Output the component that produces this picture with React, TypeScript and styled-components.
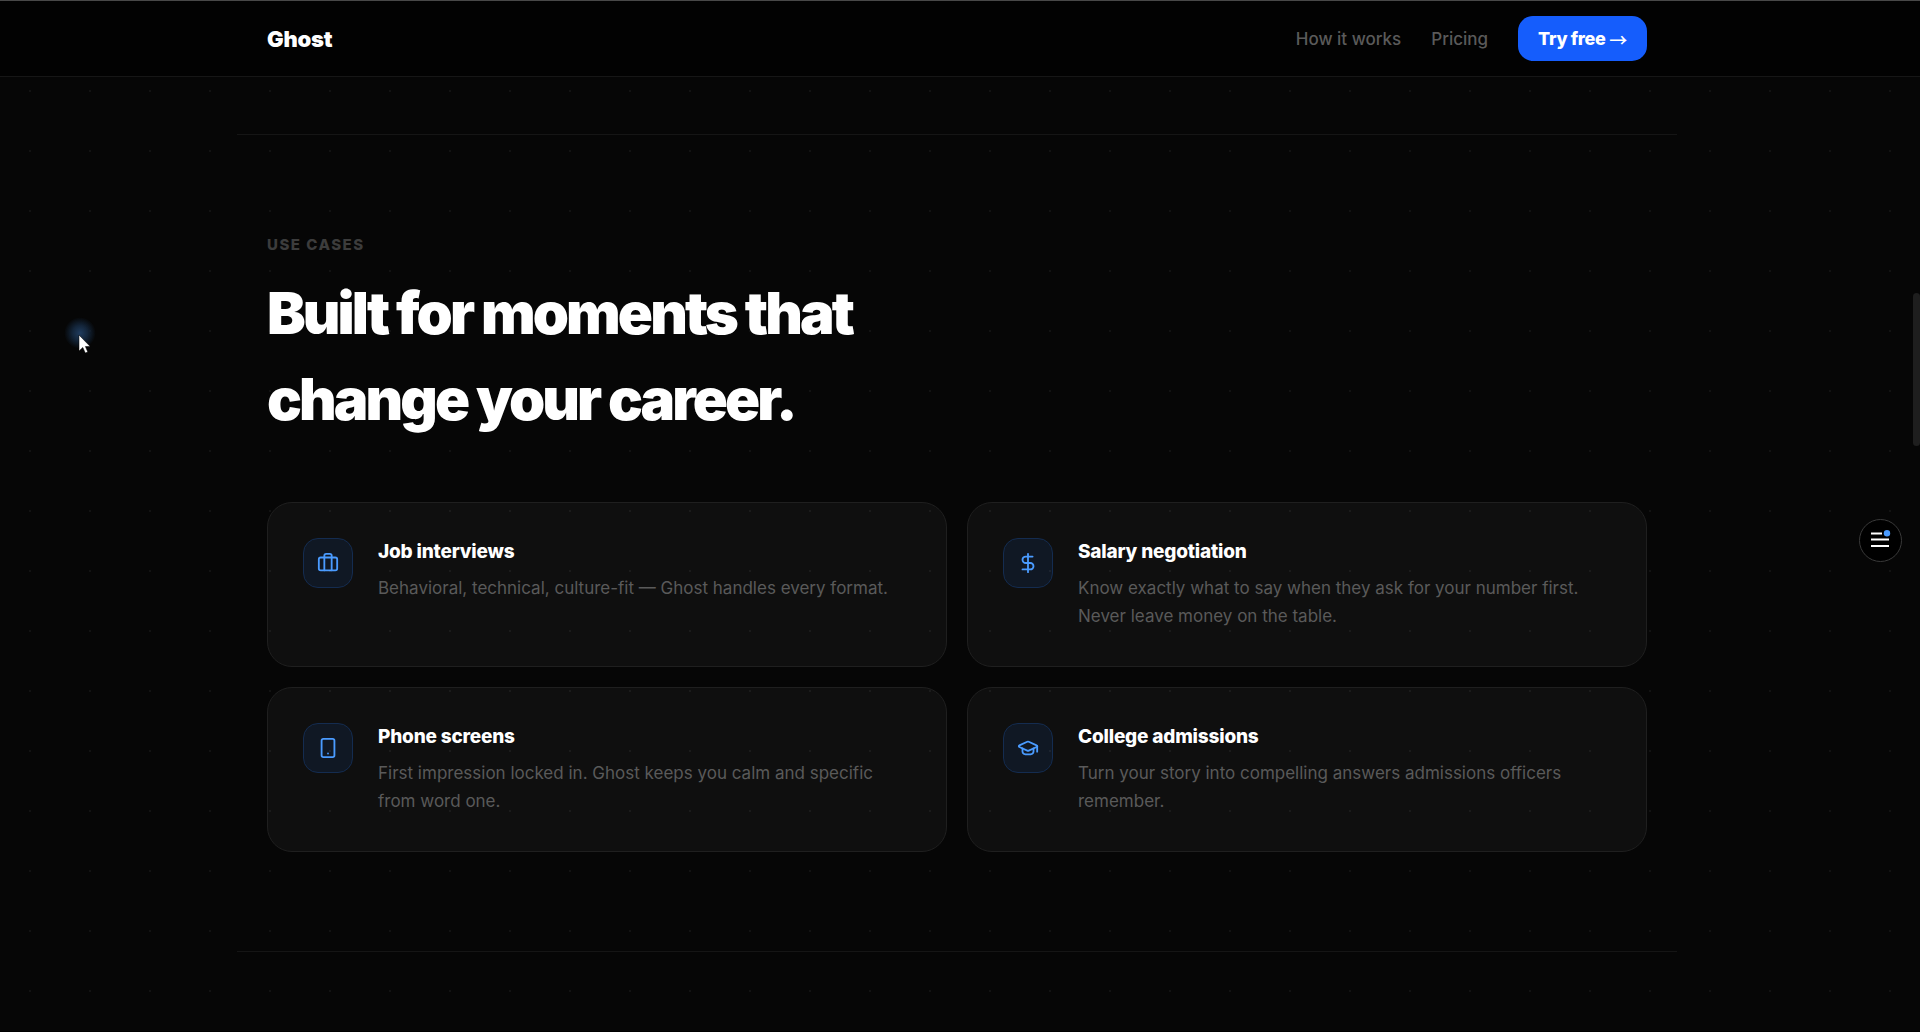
import React from "react";
import styled, { createGlobalStyle } from "styled-components";
import { Briefcase, DollarSign, GraduationCap, Smartphone } from "lucide-react";
import type { LucideIcon } from "lucide-react";

const GlobalStyle = createGlobalStyle`
  *, *::before, *::after { box-sizing: border-box; }
  html { background: #060606; }
  body {
    margin: 0;
    color: #ffffff;
    font-family: Inter, "Liberation Sans", sans-serif;
    -webkit-font-smoothing: antialiased;
  }
  h2, h3, p { margin: 0; }
`;

const Page = styled.div`
  min-height: 100vh;
  padding-right: 6px;
  border-top: 1px solid #484848;
  border-bottom: 1px solid #000000;
`;

const DotGrid = styled.div`
  position: fixed;
  inset: 1px 0 0 0;
  z-index: 1;
  pointer-events: none;
  background-image: radial-gradient(circle at center, rgba(255, 255, 255, 0.05) 1px, transparent 1px);
  background-size: 60px 60px;
`;

const Header = styled.header`
  position: relative;
  z-index: 2;
  margin-right: -6px;
  padding-right: 6px;
  background: #020202;
  border-bottom: 1px solid #161616;
`;

const HeaderInner = styled.div`
  display: flex;
  align-items: center;
  justify-content: space-between;
  max-width: 1440px;
  height: 75px;
  margin: 0 auto;
  padding: 0 30px;
`;

const Logo = styled.a`
  color: #ffffff;
  font-size: 22px;
  font-weight: 900;
  line-height: 28px;
  letter-spacing: -0.01em;
  text-decoration: none;
`;

const Nav = styled.nav`
  display: flex;
  align-items: center;
  gap: 30px;
`;

const NavLink = styled.a`
  color: #5a5a5a;
  font-size: 17px;
  font-weight: 500;
  line-height: 28px;
  text-decoration: none;
`;

const TryButton = styled.button`
  display: flex;
  align-items: center;
  gap: 4px;
  height: 45px;
  padding: 0 20px;
  border: 0;
  border-radius: 15px;
  background: #155dfc;
  color: #ffffff;
  font-family: inherit;
  font-size: 18px;
  font-weight: 800;
  line-height: 28px;
  letter-spacing: -0.02em;
  cursor: pointer;
`;

const Arrow = styled.span`
  font-family: "Noto Sans CJK JP", sans-serif;
  font-weight: 500;
`;

const Main = styled.main`
  max-width: 1440px;
  margin: 0 auto;
  padding: 57px 0 79px;
`;

const Section = styled.section`
  padding: 100px 30px 99px;
  border-top: 1px solid #151515;
  border-bottom: 1px solid #151515;
`;

const Eyebrow = styled.p`
  margin-bottom: 15px;
  color: #3c3c3c;
  font-size: 15px;
  font-weight: 800;
  line-height: 20px;
  letter-spacing: 0.1em;
  text-transform: uppercase;
`;

const Heading = styled.h2`
  margin-bottom: 60px;
  font-size: 58px;
  font-weight: 900;
  line-height: 86px;
  letter-spacing: -0.05em;
`;

const CardGrid = styled.div`
  display: grid;
  grid-template-columns: repeat(2, minmax(0, 1fr));
  gap: 20px;
`;

const Card = styled.article`
  display: flex;
  align-items: flex-start;
  gap: 25px;
  padding: 35px 35px 36px;
  border: 1px solid #1f1f1f;
  border-radius: 25px;
  background: #0f0f0f;
`;

const IconTile = styled.div`
  display: grid;
  place-items: center;
  flex: none;
  width: 50px;
  height: 50px;
  border: 1px solid #142c50;
  border-radius: 15px;
  background: #101824;
  color: #4a9bff;
`;

const CardTitle = styled.h3`
  margin-bottom: 8px;
  font-size: 19px;
  font-weight: 800;
  line-height: 28px;
  letter-spacing: -0.01em;
`;

const CardText = styled.p`
  color: #5a5a5a;
  font-size: 17px;
  line-height: 28px;
`;

const MenuButton = styled.button`
  position: fixed;
  top: 519px;
  right: 18px;
  z-index: 3;
  display: grid;
  place-items: center;
  width: 43px;
  height: 43px;
  padding: 0;
  border: 1px solid #3a3a3a;
  border-radius: 50%;
  background: #000000;
  cursor: pointer;
`;

const ScrollThumb = styled.div`
  position: fixed;
  top: 293px;
  right: 0;
  z-index: 3;
  width: 7px;
  height: 153px;
  border-radius: 4px;
  background: #1e1e1e;
`;

const Glow = styled.div`
  position: fixed;
  top: 317px;
  left: 64px;
  z-index: 4;
  width: 32px;
  height: 32px;
  border-radius: 50%;
  background: radial-gradient(circle, #203c5e 0%, #132438 35%, transparent 70%);
  pointer-events: none;
`;

const Pointer = styled.svg`
  position: fixed;
  top: 334px;
  left: 78px;
  z-index: 5;
  pointer-events: none;
`;

interface UseCase {
  icon: LucideIcon;
  title: string;
  text: string;
}

const useCases: UseCase[] = [
  {
    icon: Briefcase,
    title: "Job interviews",
    text: "Behavioral, technical, culture-fit — Ghost handles every format.",
  },
  {
    icon: DollarSign,
    title: "Salary negotiation",
    text: "Know exactly what to say when they ask for your number first. Never leave money on the table.",
  },
  {
    icon: Smartphone,
    title: "Phone screens",
    text: "First impression locked in. Ghost keeps you calm and specific from word one.",
  },
  {
    icon: GraduationCap,
    title: "College admissions",
    text: "Turn your story into compelling answers admissions officers remember.",
  },
];

export default function App() {
  return (
    <Page>
      <GlobalStyle />
      <DotGrid />
      <Header>
        <HeaderInner>
          <Logo href="#">Ghost</Logo>
          <Nav>
            <NavLink href="#how">How it works</NavLink>
            <NavLink href="#pricing">Pricing</NavLink>
            <TryButton type="button">
              Try free <Arrow>→</Arrow>
            </TryButton>
          </Nav>
        </HeaderInner>
      </Header>
      <Main>
        <Section>
          <Eyebrow>Use cases</Eyebrow>
          <Heading>
            Built for moments that
            <br />
            change your career.
          </Heading>
          <CardGrid>
            {useCases.map(({ icon: Icon, title, text }) => (
              <Card key={title}>
                <IconTile>
                  <Icon size={22} strokeWidth={2} />
                </IconTile>
                <div>
                  <CardTitle>{title}</CardTitle>
                  <CardText>{text}</CardText>
                </div>
              </Card>
            ))}
          </CardGrid>
        </Section>
      </Main>
      <MenuButton type="button" aria-label="Open menu">
        <svg width="21" height="21" viewBox="0 0 21 21" fill="none">
          <path d="M1 3.500H12M1 9.500H19M1 16H19" stroke="#ffffff" strokeWidth="2" />
          <circle cx="17" cy="3.200" r="3.200" fill="#4a9bff" />
        </svg>
      </MenuButton>
      <ScrollThumb />
      <Glow />
      <Pointer width="13" height="20" viewBox="0 0 13 20">
        <path
          d="M1 1V17L4.800 13.500L7.300 19L9.800 18L7.400 12.500H12.200Z"
          fill="#ffffff"
          stroke="#000000"
          strokeWidth="0.500"
        />
      </Pointer>
    </Page>
  );
}
